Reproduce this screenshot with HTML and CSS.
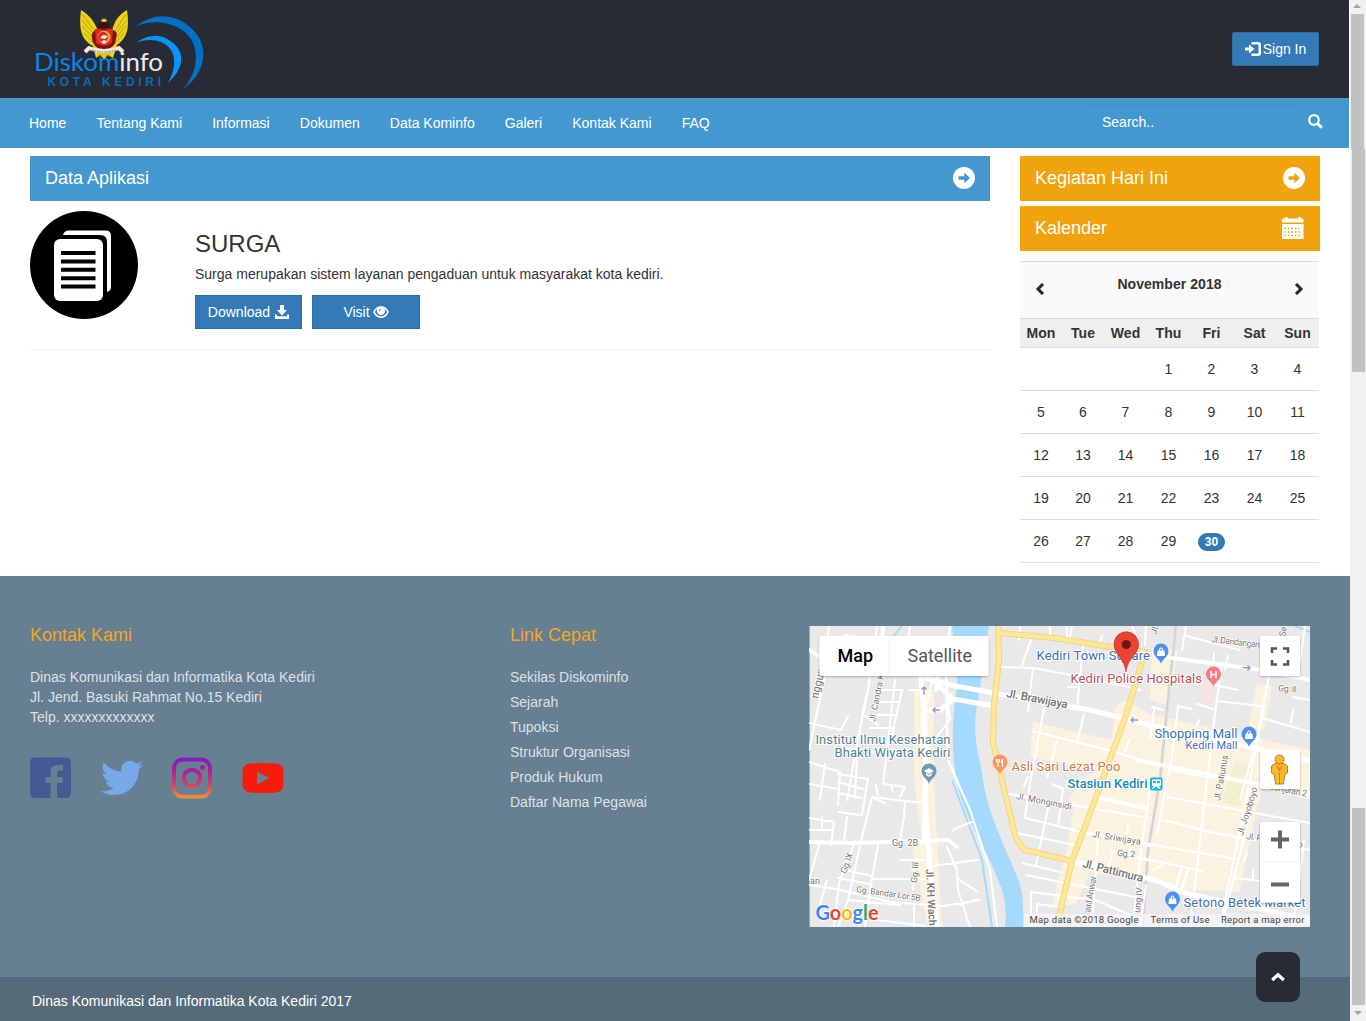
FILE: index.html
```html
<!DOCTYPE html>
<html lang="id">
<head>
<meta charset="utf-8">
<title>Diskominfo Kota Kediri</title>
<link rel="stylesheet" href="styles.css">
</head>
<body>
<div class="page">
<header class="top">
  <svg class="logo" width="172" height="84" viewBox="34 8 172 84">
    <path fill="#0072c6" d="M136 26Q156 11 177 19C213 35 209 72 183 89C202 67 200 38 177 27Q158 18 136 26Z"/>
    <path fill="#0a94fa" d="M137 42Q151 33 163 37C187 47 186 67 168 83C178 65 176 48 161 42Q151 38 137 42Z"/>
    <text x="34" y="71" class="logo-name" textLength="129" lengthAdjust="spacingAndGlyphs"><tspan fill="#0787e5">Diskom</tspan><tspan fill="#e9edf2">info</tspan></text>
    <g>
      <path fill="#ecd21b" d="M81 10C91 16 95 23 98 31L112 31C114 22 118 15 127 10C129 25 129 37 117 45L113 58L108 55L104 59L100 55L96 58L93 46C80 39 79 27 81 10Z"/>
      <path stroke="#a98e10" stroke-width=".7" fill="none" d="M82 14L97 34M82 20L96 37M82 26L95 40M84 33L94 43M126 14L113 34M127 20L113 37M126 26L114 40M124 33L115 43"/>
      <path fill="#7b1414" d="M99 24Q104 20 109 24L111 30Q119 30 116 39Q116 47 104 51Q92 47 92 38Q91 30 98 30Z"/>
      <path fill="#e32222" d="M95 29H100L104 31L108 29H113L112 43Q104 49 96 43Z"/>
      <path fill="#e8c41c" d="M101 20Q104 17 107 20L106 22H102Z"/>
      <path fill="#3b1110" d="M99 24Q104 20 109 24V28H99Z"/>
      <circle cx="104" cy="37" r="6.500" fill="#d9ae35"/><circle cx="103" cy="37" r="5" fill="#dc2b26"/>
      <path fill="#f5e9df" d="M100 38L103 35L108 36L105 39Z"/><circle cx="104" cy="42" r="2" fill="#ddd"/>
      <path fill="none" stroke="#eee9e0" stroke-width="4" d="M85 52L89 48Q104 54 119 48L123 52"/>
      <path fill="none" stroke="#77736d" stroke-width="1" stroke-dasharray="1.5 1" d="M92 50Q104 54 116 50"/>
      <path stroke="#a98e10" stroke-width=".6" d="M99 53V57M102 53V58M106 53V58M109 53V57"/>
    </g>
    <text x="47.500" y="86" class="logo-city" textLength="113.500">KOTA KEDIRI</text>
  </svg>
  <a class="btn signin"><svg width="16" height="14" viewBox="0 0 16 14"><path d="M0 5.500H4V2.500L9.500 7L4 11.500V8.500H0ZM6.500 0H13Q16 0 16 3V11Q16 14 13 14H6.500V11.500H13.500V2.500H6.500Z"/></svg>Sign In</a>
</header>
<nav class="nav">
  <a>Home</a><a>Tentang Kami</a><a>Informasi</a><a>Dokumen</a><a>Data Kominfo</a><a>Galeri</a><a>Kontak Kami</a><a>FAQ</a>
  <div class="search"><span class="field">Search..</span><svg width="15" height="15" viewBox="0 0 15 15"><circle cx="6" cy="6" r="4.800" fill="none" stroke="#fff" stroke-width="2.200"/><path stroke="#fff" stroke-width="3" d="M9.500 9.500L13.800 13.800"/></svg></div>
</nav>
<main class="main">
  <section class="apps">
    <h2 class="bar blue">Data Aplikasi<svg width="22" height="22" viewBox="0 0 22 22"><circle cx="11" cy="11" r="11" fill="#fff"/><path fill="#4498d0" d="M5.500 9.300H11.300V5.800L17 11L11.300 16.200V12.700H5.500Z"/></svg></h2>
    <article class="app">
      <svg width="108" height="108" viewBox="0 0 108 108"><circle cx="54" cy="54" r="54"/><path fill="#fff" d="M33 24Q34 19.500 39 19.500H76Q81 19.500 81 25V76Q81 80 77 81V31Q77 24 70 24Z"/><rect x="24" y="28" width="49" height="62" rx="6" fill="#fff"/><path stroke="#000" stroke-width="4" d="M31 42H65.500M31 50.400H65.500M31 58.800H65.500M31 67.200H65.500M31 75.600H65.500"/></svg>
      <div class="info">
        <h3>SURGA</h3>
        <p>Surga merupakan sistem layanan pengaduan untuk masyarakat kota kediri.</p>
        <div class="buttons">
          <a class="btn flat">Download <svg width="14" height="14" viewBox="0 0 14 14"><path d="M5 0H9V5H12L7 10.500L2 5H5ZM0 9.500H2V11.200H12V9.500H14V14H0Z"/></svg></a>
          <a class="btn flat visit">Visit<svg width="16" height="12" viewBox="0 0 16 12"><path fill-rule="evenodd" d="M0 6Q3 0 8 0T16 6Q13 12 8 12T0 6ZM1.800 6Q4.500 10.300 8 10.300T14.200 6Q13 3.500 11.300 2.700A4 4 0 1 1 4.700 2.700Q3 3.700 1.800 6Z"/><circle cx="8" cy="5" r="3.300"/><path d="M6.300 5Q6.300 3.300 8 3.300" stroke="#337ab7" fill="none"/></svg></a>
        </div>
      </div>
    </article>
  </section>
  <aside class="side">
    <h2 class="bar orange">Kegiatan Hari Ini<svg width="22" height="22" viewBox="0 0 22 22"><circle cx="11" cy="11" r="11" fill="#fff"/><path fill="#f0a30c" d="M5.500 9.300H11.300V5.800L17 11L11.300 16.200V12.700H5.500Z"/></svg></h2>
    <h2 class="bar orange">Kalender<svg class="calicon" width="22" height="22" viewBox="0 0 22 22"><path fill="#fff" d="M1 1.500H3V1Q3 0 4.500 0T6 1V1.500H16V1Q16 0 17.500 0T19 1V1.500H20.500Q21.500 1.500 21.500 3V5.500H0V3Q0 1.500 1 1.500ZM0 7H21.500V22H0Z"/><path stroke="#f0a30c" stroke-width="1.500" stroke-dasharray="1.500 2" d="M2.500 11.500H19.500M2.500 15H19.500M2.500 18.500H19.500"/></svg></h2>
    <div class="calendar">
      <div class="month"><svg width="10" height="12" viewBox="0 0 10 12"><path d="M8 1L3 6L8 11"/></svg><b>November 2018</b><svg width="10" height="12" viewBox="0 0 10 12"><path d="M2 1L7 6L2 11"/></svg></div>
      <div class="week days"><b>Mon</b><b>Tue</b><b>Wed</b><b>Thu</b><b>Fri</b><b>Sat</b><b>Sun</b></div>
      <div class="week"><span></span><span></span><span></span><span>1</span><span>2</span><span>3</span><span>4</span></div>
      <div class="week"><span>5</span><span>6</span><span>7</span><span>8</span><span>9</span><span>10</span><span>11</span></div>
      <div class="week"><span>12</span><span>13</span><span>14</span><span>15</span><span>16</span><span>17</span><span>18</span></div>
      <div class="week"><span>19</span><span>20</span><span>21</span><span>22</span><span>23</span><span>24</span><span>25</span></div>
      <div class="week"><span>26</span><span>27</span><span>28</span><span>29</span><span><b class="today">30</b></span><span></span><span></span></div>
    </div>
  </aside>
</main>
<footer class="footer">
  <section>
    <h4>Kontak Kami</h4>
    <p>Dinas Komunikasi dan Informatika Kota Kediri<br>Jl. Jend. Basuki Rahmat No.15 Kediri<br>Telp. xxxxxxxxxxxxx</p>
    <div class="social">
      <svg width="42" height="42" viewBox="0 0 42 42"><path fill="#475993" d="M5 .5H36Q41 .5 41 5.500V36Q41 41 36 41H27V26H32.500L33 20H27V17Q27 13.500 30 13.500H33V8H28Q20.500 8 20.500 15V20H15.500V26H20.500V41H5Q0 41 0 36V5.500Q0 .5 5 .5Z"/></svg>
      <svg width="42" height="42" viewBox="0 0 24 24"><path fill="#76a9ea" d="M23.953 4.570a10 10 0 01-2.825.775 4.958 4.958 0 002.163-2.723c-.951.555-2.005.959-3.127 1.184a4.920 4.920 0 00-8.384 4.482C7.690 8.095 4.067 6.130 1.640 3.162a4.822 4.822 0 00-.666 2.475c0 1.710.87 3.213 2.188 4.096a4.904 4.904 0 01-2.228-.616v.06a4.923 4.923 0 003.946 4.827 4.996 4.996 0 01-2.212.085 4.936 4.936 0 004.604 3.417 9.867 9.867 0 01-6.102 2.105c-.39 0-.779-.023-1.170-.067a13.995 13.995 0 007.557 2.209c9.053 0 13.998-7.496 13.998-13.985 0-.21 0-.42-.015-.63A9.935 9.935 0 0024 4.590z"/></svg>
      <svg width="42" height="42" viewBox="0 0 42 42"><defs><linearGradient id="ig" gradientUnits="userSpaceOnUse" x1="0" y1="0" x2="0" y2="42"><stop offset="0" stop-color="#7a1fc5"/><stop offset=".12" stop-color="#8a1bb4"/><stop offset=".4" stop-color="#bb2191"/><stop offset=".7" stop-color="#d14a60"/><stop offset="1" stop-color="#ee9a36"/></linearGradient></defs><g fill="none" stroke="url(#ig)" stroke-width="4"><rect x="3" y="2.500" width="36" height="37" rx="9"/><circle cx="21" cy="21" r="8.300"/></g><circle cx="31.500" cy="10.500" r="2.500" fill="url(#ig)"/></svg>
      <svg width="42" height="42" viewBox="0 0 42 42"><path fill="#f61c0d" fill-rule="evenodd" d="M8 6.500Q21 5.700 34 6.500Q41 7 41.500 14V28Q41 35 34 35.500Q21 36.500 8 35.500Q1 35 .5 28V14Q1 7 8 6.500ZM15 14.500V27.500L27.500 21Z"/></svg>
    </div>
  </section>
  <section class="links">
    <h4>Link Cepat</h4>
    <a>Sekilas Diskominfo</a><a>Sejarah</a><a>Tupoksi</a><a>Struktur Organisasi</a><a>Produk Hukum</a><a>Daftar Nama Pegawai</a>
  </section>
  <svg class="map" width="501" height="301" viewBox="809 626 501 301">
    <defs>
      <filter id="sh" x="-10%" y="-15%" width="120%" height="140%"><feDropShadow dx="0" dy="1" stdDeviation="1.200" flood-opacity=".28"/></filter>
      <path id="pin" d="M0 11C-1 6-7.500 4-7.500-2A7.500 7.500 0 1 1 7.500-2C7.500 4 1 6 0 11Z"/>
      <path id="bag" fill="#fff" d="M-3.500-2.500H3.500L4 3H-4ZM-2-2.500Q-2-5.500 0-5.500T2-2.500H1Q1-4.500 0-4.500T-1-2.500Z"/>
    </defs>
    <rect x="809.600" y="626" width="501" height="301" fill="#e9e9e9"/>
    <g fill="#fbf2e0">
      <path d="M914 690H934V785L942 927H928L912 850L922 840L914 780ZM1033 722L1112 740L1115 707L1125 700L1150 714L1310 750V800L1262 788L1240 892L1180 890L1150 882L1090 872L1075 905H1052L1066 852L1074 805H1066L1080 780L1098 770L1030 757ZM1152 648L1178 650L1168 706L1150 700ZM1257 683L1272 686L1264 730H1248Z"/>
    </g>
    <path fill="#e9e9e9" d="M1268 706L1310 716V745L1264 738ZM1258 803L1310 817V890L1240 888Z"/>
    <path fill="#f2f1cf" d="M1235 763L1252 766L1240 806L1221 802Z"/>
    <path fill="#f7e3e3" d="M1203 682L1214 686L1211 706L1199 702Z"/>
    <path fill="#a5dafe" d="M952 626H989C985 650 982 675 978 700C970 735 981 760 983 780C989 820 1010 855 1020 885Q1024 897 1023 927H1005Q1008 900 998 880C989 853 960 810 957 780C953 762 951 735 955 700C961 675 953 645 952 626Z"/>
    <path stroke="#a5dafe" stroke-width="2" fill="none" d="M890 640L902 626M952 780L982 860L992 927M1295 626L1310 632"/>
    <path stroke="#dcdddf" stroke-width="3" fill="none" d="M1176 626L1168 700L1160 780L1148 850L1143 927"/>
    <path stroke="#cbced1" fill="none" d="M1176 626L1168 700L1160 780L1148 850L1143 927"/>
    <g fill="none" stroke="#fff" stroke-linejoin="round" stroke-linecap="round">
      <path stroke-width="2" d="M829 626L824 680L809 750M809 723L841 730L848 716M866 696L857 745L847 800M809 762L840 772L838 805M877 626L868 690M868 690L863 715L878 725M895 680L883 785M881 690H902L892 735M878 702H900M874 715H897M870 728H894M847 748L893 755M858 735L855 798M825 764L820 800M838 774L868 779L862 815M838 782L866 790M838 793L862 798M838 812L860 815M809 818L834 822L831 845M822 817V830M809 830H831M847 817L844 841M809 784L839 789M872 797L861 841L848 900L838 927M872 797L905 801L904 817L900 840M872 797L884 803H885M885 784L905 787L900 797M878 795L876 785M893 792L891 785M905 801L925 803M878 845L870 890L865 927M855 841L839 883L834 927M845 870L872 876M838 878L870 884M873 879H925M900 860H925M820 842L809 880M809 885L836 889L870 897L890 902L943 906L980 900M827 880L820 905M848 900L900 905M868 919L925 926M914 906V927M913 890L915 860M947 847L957 870L958 890M930 866L978 860M958 879L978 892M958 890L970 927M960 905L978 899M910 626L904 665M945 640L948 760L970 810L990 870L997 927M940 640L930 690L925 710M950 626L945 660L948 700M954 829L972 822M954 829L952 832M930 780L923 760M909 690L925 690M938 735L950 720L947 700"/>
      <path stroke-width="2" d="M1020 627L1019 640M1050 626V640M1067 626V641M1072 626L1069 642M1102 636L1099 645M1031 640L1022 665M1002 667L1033 668L1098 680L1141 690M1033 668L1028 711M1083 646L1077 709M1068 687H1076M1044 709L1030 783M1032 731L1112 751L1150 763M1084 714L1077 743M1057 741L1047 778M1125 751L1130 739M1030 783L1025 818L1090 834M1024 786L1028 777M1052 784L1063 789L1058 826M1008 794L1148 818M1017 833L1075 845M1048 808L1036 865M1022 863L1060 872M1026 875L1135 897M1031 927L1031 892L1095 900L1130 915M1037 922V904L1060 907M1098 838L1092 927M1126 835L1128 825M1111 851L1150 861M1113 851L1109 865M1150 790L1140 857L1133 927M1132 626L1138 640M1146 626L1145 645M1186 626L1182 650M1186 636L1240 650M1213 664L1214 653M1225 670L1228 656M1222 663L1216 706L1210 755L1190 927M1215 685L1238 690M1217 701L1262 706M1197 704L1213 709M1199 720L1197 725M1264 706L1250 780L1220 927M1270 670L1258 735L1240 800M1293 697L1310 700M1262 718L1310 732M1293 710L1291 723M1305 626L1300 660M1152 707L1163 710M1150 740L1154 710M1157 835L1172 755L1178 706L1191 709M1140 760L1154 765M1170 770L1210 778M1168 797L1310 823M1163 820L1210 832L1310 850M1142 843L1236 859M1142 858L1202 871M1182 867L1175 889M1188 870L1181 891M1146 885L1140 927M1234 878L1262 881M1254 796L1236 870L1223 920M1247 853L1244 861M1253 870L1253 880M1304 840L1293 927M1162 865L1154 870"/>
      <path stroke-width="4" d="M809 842L853 843L925 841L948 840L957 847M925 803L924 842M883 626L882 640M877 640L845 636M1164 657L1262 670L1310 680M1137 760L1310 795M1100 798L1145 808M1090 834L1150 845M940 655L936 690M809 650L825 660"/>
      <path stroke-width="5" d="M920 670L923 700L926 760L925 800L930 870L937 927M925 710H940L953 700"/>
      <path stroke-width="5" d="M926 678L955 686L1090 710L1190 735L1310 760M930 678L953 699L995 706M1072 861L1155 880L1185 893L1310 920"/>
      <path stroke="#edd179" stroke-width="6" d="M998 622L999 660L994 705L993 742L1003 785L1015 835Q1018 844 1025 850L1072 861M999 633L1055 638L1105 646L1145 652L1125 718L1098 792L1072 861L1056 930"/>
      <path stroke="#ffe798" stroke-width="4.500" d="M998 622L999 660L994 705L993 742L1003 785L1015 835Q1018 844 1025 850L1072 861M999 633L1055 638L1105 646L1145 652L1125 718L1098 792L1072 861L1056 930"/>
    </g>
    <g class="street">
      <text transform="translate(818 699) rotate(-77)" font-size="11">nggungan</text>
      <text transform="translate(875 722) rotate(-79)">Jl. Candra Kirana</text>
      <text transform="translate(1006 697) rotate(10.500)" font-size="11.500" textLength="62" class="major">Jl. Brawijaya</text>
      <text transform="translate(1211 642) rotate(7)" textLength="49">Jl. Dandangan</text>
      <text x="1278" y="691" textLength="18" transform="rotate(5 1278 691)">Gg. II</text>
      <text transform="translate(1220 801) rotate(-80)" textLength="46">Jl. Patiunus</text>
      <text transform="translate(1243 836) rotate(-73)" textLength="50">Jl. Joyoboyo</text>
      <text transform="translate(1269 789) rotate(12)" textLength="38">Banjaran 2</text>
      <text transform="translate(1246 839) rotate(9)" textLength="57">Jl. Panglima Po</text>
      <text transform="translate(1016 799) rotate(11)" textLength="56">Jl. Monginsidi</text>
      <text transform="translate(1092 837) rotate(9)" textLength="49">Jl. Sriwijaya</text>
      <text transform="translate(1117 856) rotate(4)" textLength="18">Gg. 2</text>
      <text transform="translate(1082 867) rotate(14)" font-size="11.500" textLength="62" class="major">Jl. Pattimura</text>
      <text transform="translate(1090 913) rotate(-80)" textLength="37">airil Anwar</text>
      <text transform="translate(1140 913) rotate(-84)">ung IV</text>
      <text x="892" y="846" textLength="26">Gg. 2B</text>
      <text transform="translate(846 874) rotate(-70)" textLength="21">Gg. IX</text>
      <text transform="translate(917 883) rotate(-86)" textLength="21">Gg. III</text>
      <text transform="translate(856 892) rotate(8)" font-size="8.500" textLength="65">Gg. Bandar Lor 5B</text>
      <text x="810" y="884">an</text>
      <text transform="translate(926 869) rotate(87)" font-size="10.500" textLength="57" class="major">Jl. KH Wach</text>
      <text transform="translate(1156 635) rotate(-70)">Jl.</text><text transform="translate(1285 637) rotate(-80)">Se</text>
    </g>
    <g stroke="#8c9cba" stroke-width="1.400" fill="none"><path d="M924 695V687M921.500 689.500L924 687L926.500 689.500M940 710H933M935.500 707.500L933 710L935.500 712.500M1138 720H1131M1133.500 717.500L1131 720L1133.500 722.500M1243 667.500L1250 668M1247.500 665.500L1250 668L1247.500 670.500"/></g>
    <g class="place">
      <g fill="#577f92"><text x="815.500" y="744" textLength="135">Institut Ilmu Kesehatan</text><text x="834.500" y="756.500" textLength="116">Bhakti Wiyata Kediri</text></g>
      <g fill="#416fb8"><text x="1036.500" y="659.500" textLength="113.500">Kediri Town Square</text><text x="1154.500" y="738" textLength="83">Shopping Mall</text><text x="1185.500" y="749" font-size="11" textLength="52">Kediri Mall</text><text x="1183.500" y="907" textLength="122">Setono Betek Market</text></g>
      <text x="1070.500" y="682.500" fill="#b95055" textLength="131.500">Kediri Police Hospitals</text>
      <text x="1011.500" y="771" fill="#cf7944" textLength="109">Asli Sari Lezat Poo</text>
      <text x="1067.500" y="788" fill="#1688c1" class="major" textLength="80">Stasiun Kediri</text>
    </g>
    <g transform="translate(929 773)"><use href="#pin" fill="#709bac"/><path fill="#fff" d="M-5-2L0-5L5-2L0 1ZM-3 0L0 2L3 0V2L0 4L-3 2Z"/></g>
    <g transform="translate(1161 653)"><use href="#pin" fill="#4a90ef"/><use href="#bag"/></g>
    <g transform="translate(1249 736)"><use href="#pin" fill="#4a90ef"/><use href="#bag"/></g>
    <g transform="translate(1172.500 901)"><use href="#pin" fill="#4a90ef"/><use href="#bag"/></g>
    <g transform="translate(1213.500 676)"><use href="#pin" fill="#fb7980"/><path stroke="#fff" stroke-width="1.600" d="M-2.500-5V2M2.500-5V2M-2.500-1.500H2.500"/></g>
    <g transform="translate(1000 764)"><use href="#pin" fill="#ff9760"/><path stroke="#fff" fill="none" d="M-2-5V3M-3.500-5V-2H-.5V-5M2.500 3V-5Q1-3 1.500-1H3"/></g>
    <rect x="1150" y="777.500" width="12.500" height="13" rx="2" fill="#0eb5e5"/><path fill="#fff" d="M1152 779.500H1161V786H1159L1161 789H1159L1157 787H1155L1153 789H1151.500L1154 786H1152Z"/><path stroke="#0eb5e5" stroke-width="2" d="M1153 782H1155.800M1157 782H1160"/>
    <path fill="#e94335" stroke="#bd3129" stroke-width=".6" d="M1126 672C1124 657 1114 655 1114 644A12.300 12.300 0 0 1 1138.600 644C1138.600 655 1128 657 1126 672Z"/><circle cx="1126.300" cy="644.500" r="4.500" fill="#70150f"/>
    <rect x="1024" y="914" width="286" height="13" fill="#f5f5f5" opacity=".75"/>
    <g font-size="9.500" fill="#444"><text x="1029.500" y="923" textLength="109">Map data ©2018 Google</text><text x="1150.500" y="923" textLength="59">Terms of Use</text><text x="1221" y="923" textLength="83.500">Report a map error</text></g>
    <text x="815.500" y="919.500" class="google" textLength="63" lengthAdjust="spacingAndGlyphs"><tspan fill="#4285f4">G</tspan><tspan fill="#ea4335">o</tspan><tspan fill="#fbbc05">o</tspan><tspan fill="#4285f4">g</tspan><tspan fill="#34a853">l</tspan><tspan fill="#ea4335">e</tspan></text>
    <g filter="url(#sh)" fill="#fff"><rect x="819.500" y="636" width="169" height="40" rx="2"/><rect x="1260" y="636" width="40" height="40" rx="2"/><rect x="1260" y="749.500" width="40" height="39.500" rx="2"/><rect x="1260" y="822" width="40" height="80.500" rx="2"/></g>
    <path stroke="#eee" d="M889.500 636V676M1265 862H1295"/>
    <text x="837.500" y="662" font-size="18" font-weight="500" fill="#000" textLength="35.500">Map</text><text x="907.500" y="662" font-size="18" fill="#565656" textLength="64.500">Satellite</text>
    <path fill="none" stroke="#555" stroke-width="2.500" d="M1272 653V648.500H1277M1283 648.500H1288V653M1288 660V664.500H1283M1277 664.500H1272V660"/>
    <path stroke="#666" stroke-width="4" d="M1271 839.500H1289M1280 830.500V848.500M1271 884.500H1289"/>
    <g fill="#fbb829" stroke="#a66f16" stroke-width=".8"><path d="M1275 763.500L1271.500 766V773L1274 774L1275.500 784H1283.500L1285 774L1287.500 773V766L1284 763.500Z"/><circle cx="1279.500" cy="759.500" r="4.500"/></g><path fill="#e6832f" d="M1275.500 765L1279.500 768L1283.500 765L1279.500 772Z"/><path stroke="#a66f16" stroke-width=".8" d="M1279.500 773V784"/>
  </svg>
</footer>
<div class="copy">Dinas Komunikasi dan Informatika Kota Kediri 2017</div>
<a class="totop"><svg width="14" height="10" viewBox="0 0 14 10"><path fill="none" stroke="#fff" stroke-width="3.400" d="M1.200 8L7 2.800L12.800 8"/></svg></a>
</div>
<div class="scroll"><i class="arrow up"></i><i class="thumb first"></i><i class="thumb second"></i><i class="gap"></i><i class="thumb third"></i><i class="arrow down"></i></div>
</body>
</html>
```
FILE: styles.css
```css
* { box-sizing: border-box; }
body { margin: 0; width: 1366px; height: 1021px; overflow: hidden; display: flex; background: #fff; color: #333; font: 14px/20px "Liberation Sans", Arial, sans-serif; }
h2, h3, h4, p { margin: 0; font-weight: 400; }
svg { display: block; flex: none; }
.page { width: 1350px; height: 1021px; position: relative; display: flex; flex-direction: column; }
.top { width: 1349px; height: 98px; padding: 0 30px 0 34px; background: #272b35; display: flex; justify-content: space-between; align-items: center; }
.logo { margin-top: 2px; }
.logo-name { font: 400 25px Lato, sans-serif; }
.logo-city { font: bold 12px "Liberation Sans", sans-serif; fill: #0b6cb4; }
.btn { height: 34px; display: flex; align-items: center; justify-content: center; background: #337ab7; border: 1px solid #2e6da4; color: #fff; border-radius: 2px; fill: #fff; }
.signin { width: 87px; gap: 2px; }
.nav { width: 1349px; height: 50px; background: #4498d0; color: #fff; display: flex; align-items: center; padding-left: 29px; gap: 30.1px; }
.search { margin-left: auto; margin-right: 26px; margin-top: -3px; display: flex; align-items: center; gap: 11px; }
.field { width: 207px; height: 34px; padding: 7px 12px; box-shadow: inset 0 1px 1px rgba(0, 0, 0, .075); }
.main { height: 428px; padding: 8px 30px 0; display: flex; gap: 30px; }
.apps { width: 960px; }
.side { width: 300px; }
.bar { height: 45px; padding: 0 15px 2px; display: flex; align-items: center; justify-content: space-between; color: #fff; font-size: 18px; margin-bottom: 5px; }
.bar svg { margin-top: 1px; }
.bar .calicon { margin-right: 1px; }
.blue { background: #4498d0; }
.orange { background: #f0a30c; }
.app { height: 144px; padding-top: 5px; display: flex; gap: 57px; border-bottom: 1px solid #eee; }
.info { padding-top: 20px; }
.info h3 { font-size: 24px; line-height: 26px; }
.info p { margin: 7px 0 11px; }
.buttons { display: flex; gap: 10px; }
.flat { width: 107px; border-radius: 0; gap: 5px; }
.visit { width: 108px; gap: 3px; }
.calendar { width: 299px; margin-top: 10px; border-top: 1px solid #ddd; }
.month { height: 56px; background: #fafafa; padding: 12px 15px 0; display: flex; justify-content: space-between; letter-spacing: .05px; }
.month svg { margin-top: 9px; fill: none; stroke: #292929; stroke-width: 3; }
.week { height: 43px; display: grid; grid-template-columns: 42px 42px repeat(5, 43px); align-items: center; text-align: center; border-bottom: 1px solid #ddd; }
.days { height: 30px; background: #efefef; border-top: 1px solid #ddd; letter-spacing: .1px; }
.today { display: inline-block; width: 27px; height: 18px; line-height: 18px; font-size: 12px; border-radius: 9px; background: #337ab7; color: #fff; }
.footer { height: 401px; background: #667f91; padding: 50px 40px 0 30px; display: grid; grid-template-columns: 480px 299px 501px; align-content: start; color: #dde3e7; }
.footer h4 { color: #f5a623; font-size: 18px; line-height: 18px; margin-bottom: 23px; }
.social { display: flex; gap: 28.6px; margin-top: 30px; }
.links a { display: block; line-height: 20px; margin-bottom: 5px; }
.map { font-family: Roboto, sans-serif; }
.street { font-size: 9px; fill: #737373; stroke: #fff; stroke-width: 1.5px; paint-order: stroke; }
.place { font-size: 13px; stroke: #fff; stroke-width: 2px; paint-order: stroke; }
.major { font-weight: 500; }
.google { font: 700 20px Lato, sans-serif; stroke: #fff; stroke-width: 1.5px; paint-order: stroke; }
.copy { height: 44px; background: #566b7a; color: #fff; padding: 14px 32px; }
.totop { position: absolute; left: 1256px; top: 952px; width: 44px; height: 50px; border-radius: 9px; background: #272b35; display: flex; align-items: center; justify-content: center; }
.scroll { width: 16px; background: #f1f1f1; display: flex; flex-direction: column; }
.scroll i { display: block; flex: none; }
.thumb { width: 13px; background: #c1c1c1; margin-left: 1px; }
.first { height: 135px; }
.second { height: 223px; margin-left: 2px; }
.gap { height: 436px; }
.third { height: 197px; margin-left: 2px; }
.arrow { width: 0; height: 8px; border: 4px solid transparent; }
.up { margin-left: 3px; border-bottom-color: #a3a3a3; margin-bottom: 6px; }
.down { margin-left: 4px; margin-top: 6px; border-top-color: #a3a3a3; }
```
